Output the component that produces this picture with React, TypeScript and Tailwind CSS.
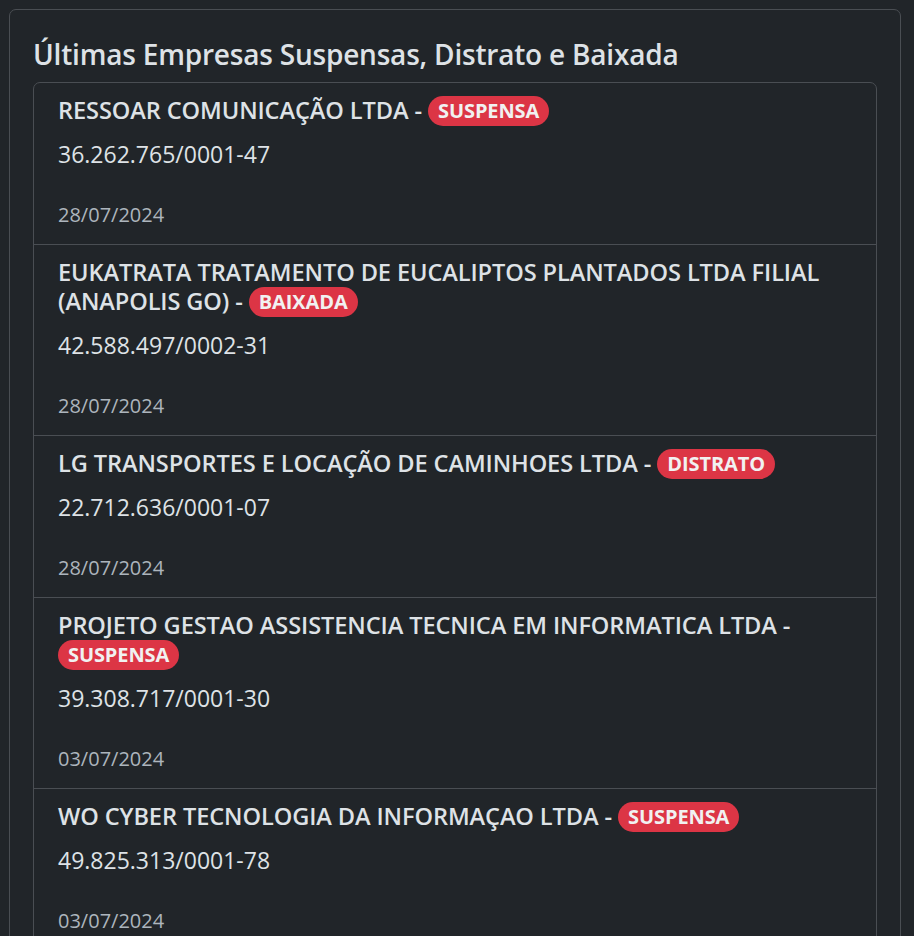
const empresas = [
  {
    nome: 'RESSOAR COMUNICAÇÃO LTDA',
    status: 'SUSPENSA',
    cnpj: '36.262.765/0001-47',
    data: '28/07/2024',
  },
  {
    nome: 'EUKATRATA TRATAMENTO DE EUCALIPTOS PLANTADOS LTDA FILIAL (ANAPOLIS GO)',
    status: 'BAIXADA',
    cnpj: '42.588.497/0002-31',
    data: '28/07/2024',
  },
  {
    nome: 'LG TRANSPORTES E LOCAÇÃO DE CAMINHOES LTDA',
    status: 'DISTRATO',
    cnpj: '22.712.636/0001-07',
    data: '28/07/2024',
  },
  {
    nome: 'PROJETO GESTAO ASSISTENCIA TECNICA EM INFORMATICA LTDA',
    status: 'SUSPENSA',
    cnpj: '39.308.717/0001-30',
    data: '03/07/2024',
  },
  {
    nome: 'WO CYBER TECNOLOGIA DA INFORMAÇAO LTDA',
    status: 'SUSPENSA',
    cnpj: '49.825.313/0001-78',
    data: '03/07/2024',
  },
]

const App = () => {
  return (
    <div
      className="min-h-[936px] bg-[#212529] pt-[9px] pl-[9px] text-[#dee2e6]"
      style={{ fontFamily: '"Open Sans", "Noto Sans", sans-serif' }}
    >
      <div className="w-[892px] rounded-[7px] border border-[#4a4e53] px-[23px] pb-6">
        <h4 className="pt-[24px] pb-[8px] text-[28px] leading-[40px] font-semibold tracking-[-0.2px]">
          Últimas Empresas Suspensas, Distrato e Baixada
        </h4>
        <ul className="rounded-[7px] border border-[#4a4e53]">
          {empresas.map((e) => (
            <li
              key={e.cnpj}
              className="border-b border-[#4a4e53] px-6 pt-[13px] pb-[17px] last:border-b-0"
            >
              {/* badge sits on the last line, keeps that line at 30px */}
              <h5 className="text-[23.6px] leading-[29px] font-semibold tracking-[-0.1px]">
                {e.nome} -{' '}
                <span className="inline-block rounded-full bg-[#dc3545] px-[10px] align-top text-[20px] leading-[30px] font-bold text-[#f1f1f1]">
                  {e.status}
                </span>
              </h5>
              <p className="mt-[13px] text-[23px] leading-[30px]">{e.cnpj}</p>
              <p className="mt-[34px] text-[20px] leading-[24px] text-[#adb5bd]">{e.data}</p>
            </li>
          ))}
        </ul>
      </div>
    </div>
  )
}

export default App
